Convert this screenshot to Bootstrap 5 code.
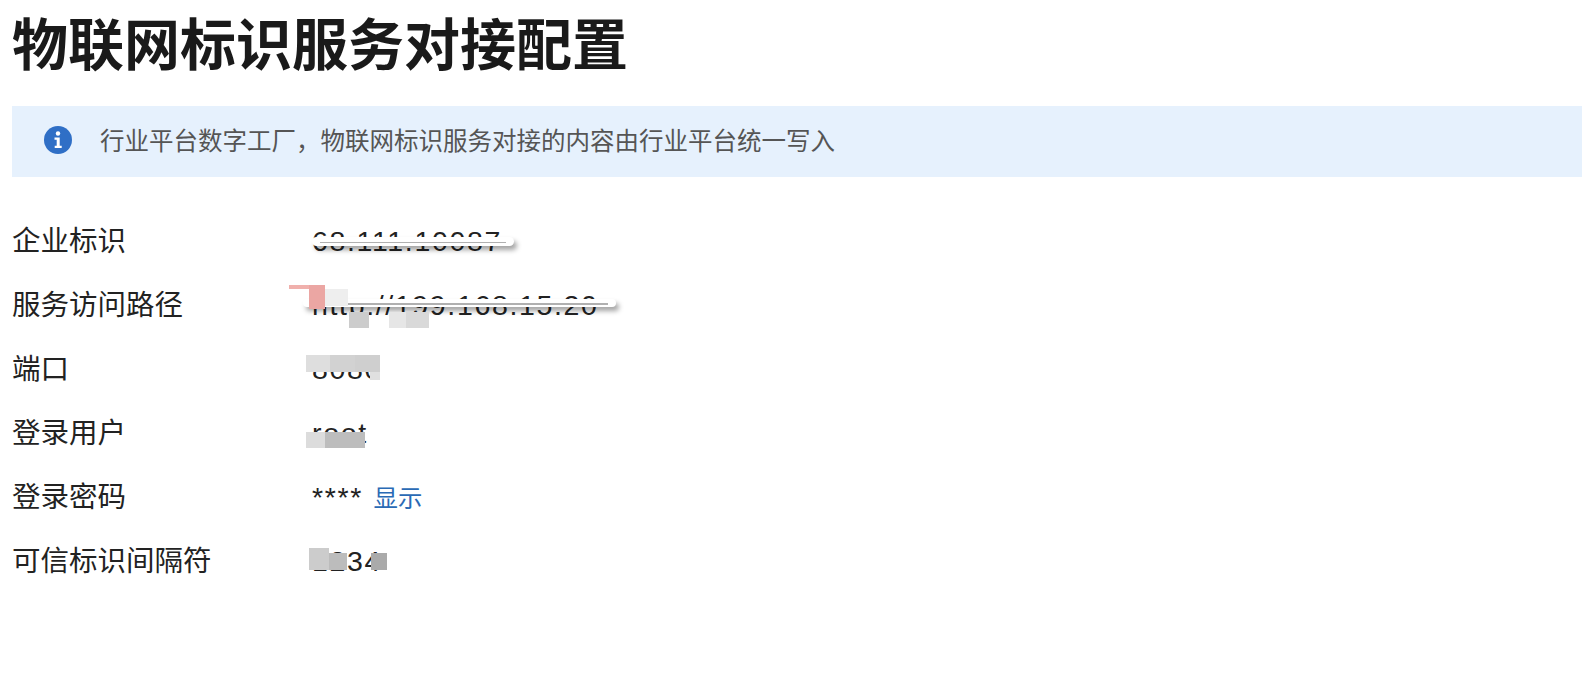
<!DOCTYPE html>
<html lang="zh-CN">
<head>
<meta charset="utf-8">
<title>物联网标识服务对接配置</title>
<link href="https://cdn.jsdelivr.net/npm/bootstrap@5.3.0/dist/css/bootstrap.min.css" rel="stylesheet">
<style>
html,body{height:100%;overflow:hidden}
body{background:#fff;color:#222;font-family:"Liberation Sans","Noto Sans CJK SC",sans-serif}
.cfg-page{padding-left:12px}
.cfg-title{font-size:56px;font-weight:700;line-height:60px;margin:0;padding-top:16px;color:#1a1a1a;font-family:"Liberation Sans","Noto Sans CJK SC",sans-serif}
.cfg-note{height:71px;margin:30px 0 30px;padding:0 0 0 31px;background:#e6f1fd;border:0;border-radius:0;color:#555;font-size:24.5px;gap:27px}
.cfg-note svg{width:30px;height:30px;flex:none;margin-top:-4px}
.cfg-note span{padding-top:2px}
.cfg-row{height:64.1px;font-size:28.5px;line-height:63.5px}
.cfg-label{width:298px;flex:none;padding-top:3px}
.cfg-val{position:relative;flex:1;color:#222;padding:3px 0 0 2px;letter-spacing:1.65px}
.cfg-show{color:#2a6ab5;text-decoration:none;font-size:24.4px;letter-spacing:0;margin-left:1px}
.smear{position:absolute;display:block}
.band{background:#fff;border-radius:9px;box-shadow:3px 4px 5px rgba(0,0,0,.36)}
.band::after{content:"";position:absolute;left:8px;right:8px;top:50%;height:1.5px;background:#b0b0b0}
.b1{left:2px;top:30px;width:202px;height:9px}
.b2{left:-7px;top:28px;width:313px;height:8px}
.r1{left:-21px;top:14px;width:36px;height:4px;background:#f0b0ac}
.r2{left:-1px;top:14px;width:16px;height:24px;background:#eba6a3}
.g1{left:15px;top:18px;width:23px;height:17px;background:#eee}
.g2{left:39px;top:41px;width:20px;height:16px;background:#ccc}
.g3{left:79px;top:41px;width:17px;height:16px;background:#e6e6e6}
.g4{left:96px;top:41px;width:23px;height:16px;background:#d9d9d9}
.p1{left:-4px;top:20px;width:24px;height:17px;background:#dedede}
.p2{left:20px;top:20px;width:25px;height:17px;background:#d2d2d2}
.p3{left:45px;top:20px;width:25px;height:17px;background:#cfcfcf}
.p4{left:60px;top:37px;width:10px;height:8px;background:#e0e0e0}
.u1{left:-4px;top:33px;width:19px;height:16px;background:#dcdcdc}
.u2{left:15px;top:33px;width:40px;height:16px;background:#bdbdbd}
.s1{left:-1px;top:21px;width:20px;height:22px;background:#ccc}
.s2{left:19px;top:26px;width:18px;height:17px;background:#bcbcbc}
.s3{left:61px;top:26px;width:16px;height:17px;background:#aaa}
</style>
</head>
<body>
<main class="cfg-page">
  <h1 class="cfg-title">物联网标识服务对接配置</h1>
  <div class="alert cfg-note d-flex align-items-center" role="alert">
    <svg viewBox="0 0 30 30" aria-hidden="true"><circle cx="15" cy="15" r="14" fill="#2f6fc6"/><circle cx="15" cy="8.5" r="2.2" fill="#fff"/><path d="M11.5 12.5h5.2v8.2h2v2.2h-7v-2.2h2v-6h-2.2z" fill="#fff"/></svg>
    <span>行业平台数字工厂，物联网标识服务对接的内容由行业平台统一写入</span>
  </div>
  <div class="d-flex cfg-row"><div class="cfg-label">企业标识</div><div class="cfg-val">68.111.10087<i class="smear band b1"></i></div></div>
  <div class="d-flex cfg-row"><div class="cfg-label">服务访问路径</div><div class="cfg-val">http://199.168.15.20<i class="smear band b2"></i><i class="smear r1"></i><i class="smear r2"></i><i class="smear g1"></i><i class="smear g2"></i><i class="smear g3"></i><i class="smear g4"></i></div></div>
  <div class="d-flex cfg-row"><div class="cfg-label">端口</div><div class="cfg-val">8080<i class="smear p1"></i><i class="smear p2"></i><i class="smear p3"></i><i class="smear p4"></i></div></div>
  <div class="d-flex cfg-row"><div class="cfg-label">登录用户</div><div class="cfg-val">root<i class="smear u1"></i><i class="smear u2"></i></div></div>
  <div class="d-flex cfg-row"><div class="cfg-label">登录密码</div><div class="cfg-val">**** <a class="cfg-show" href="#">显示</a></div></div>
  <div class="d-flex cfg-row"><div class="cfg-label">可信标识间隔符</div><div class="cfg-val">1234<i class="smear s1"></i><i class="smear s2"></i><i class="smear s3"></i></div></div>
</main>
<script src="https://cdn.jsdelivr.net/npm/bootstrap@5.3.0/dist/js/bootstrap.bundle.min.js"></script>
</body>
</html>
